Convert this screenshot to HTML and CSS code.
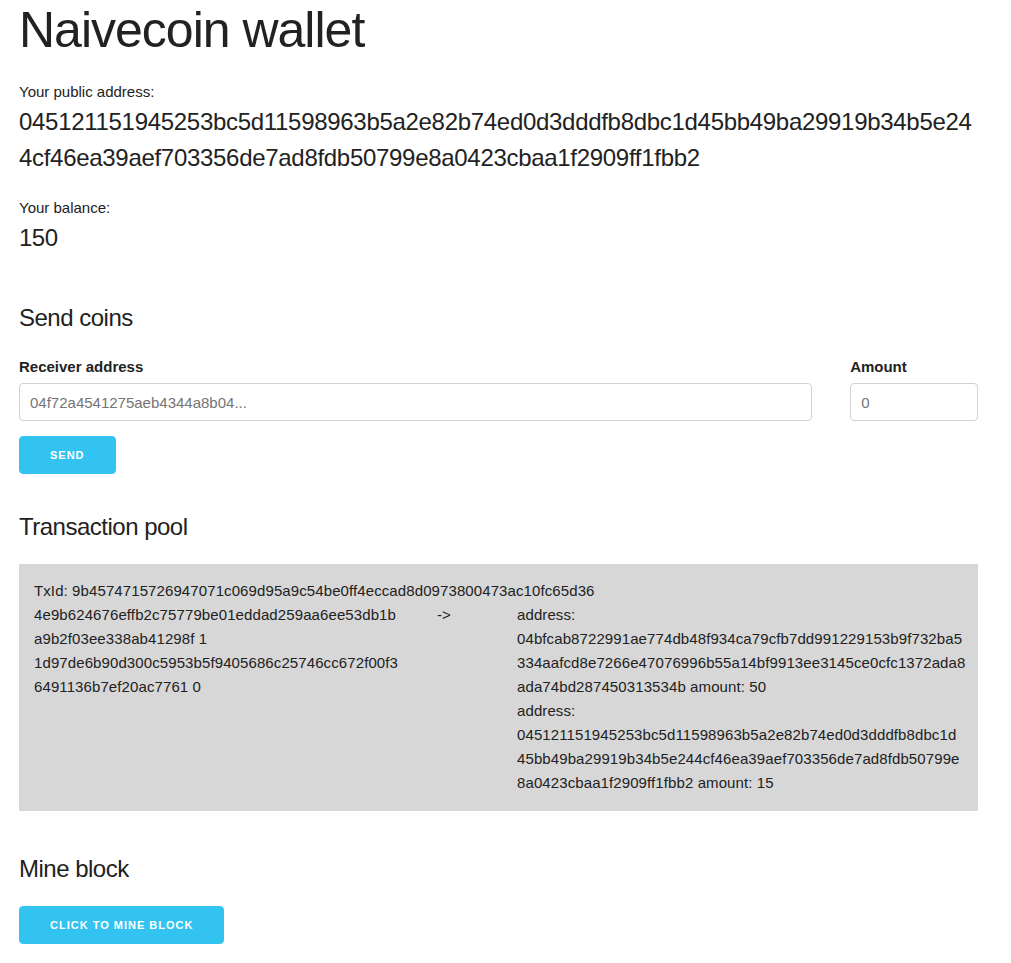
FILE: index.html
```html
<!DOCTYPE html>
<html lang="en">
<head>
<meta charset="utf-8">
<title>Naivecoin wallet</title>
<link rel="stylesheet" href="styles.css">
</head>
<body>
<div class="wallet">
  <h1 class="title">Naivecoin wallet</h1>

  <section class="info">
    <p class="info-label">Your public address:</p>
    <h5 class="address">045121151945253bc5d11598963b5a2e82b74ed0d3dddfb8dbc1d45bb49ba29919b34b5e244cf46ea39aef703356de7ad8fdb50799e8a0423cbaa1f2909ff1fbb2</h5>
    <p class="info-label">Your balance:</p>
    <h5 class="balance">150</h5>
  </section>

  <section class="send">
    <h5 class="section-title">Send coins</h5>
    <div class="form-row">
      <div class="field">
        <label class="field-label" for="receiver">Receiver address</label>
        <input class="field-input" id="receiver" type="text" placeholder="04f72a4541275aeb4344a8b04...">
      </div>
      <div class="field">
        <label class="field-label" for="amount">Amount</label>
        <input class="field-input" id="amount" type="text" placeholder="0">
      </div>
    </div>
    <button class="btn" type="button">Send</button>
  </section>

  <section class="pool">
    <h5 class="section-title">Transaction pool</h5>
    <div class="pool-box">
      <div class="tx">
        <div class="tx-id">TxId: 9b4574715726947071c069d95a9c54be0ff4eccad8d0973800473ac10fc65d36</div>
        <div class="tx-body">
          <div class="tx-ins">
            <div class="tx-in">4e9b624676effb2c75779be01eddad259aa6ee53db1ba9b2f03ee338ab41298f 1</div>
            <div class="tx-in">1d97de6b90d300c5953b5f9405686c25746cc672f00f36491136b7ef20ac7761 0</div>
          </div>
          <div class="tx-arrow">-&gt;</div>
          <div class="tx-outs">
            <div class="tx-out">address: 04bfcab8722991ae774db48f934ca79cfb7dd991229153b9f732ba5334aafcd8e7266e47076996b55a14bf9913ee3145ce0cfc1372ada8ada74bd287450313534b amount: 50</div>
            <div class="tx-out">address: 045121151945253bc5d11598963b5a2e82b74ed0d3dddfb8dbc1d<br>45bb49ba29919b34b5e244cf46ea39aef703356de7ad8fdb50799e<br>8a0423cbaa1f2909ff1fbb2 amount: 15</div>
          </div>
        </div>
      </div>
    </div>
  </section>

  <section class="mine">
    <h5 class="section-title">Mine block</h5>
    <button class="btn" type="button">Click to mine block</button>
  </section>
</div>
</body>
</html>
```

FILE: styles.css
```css
html, body {
  margin: 0;
  padding: 0;
  background: #fff;
}

body {
  font-family: "Liberation Sans", Helvetica, Arial, sans-serif;
  font-size: 15px;
  line-height: 24px;
  color: #222;
}

.wallet {
  width: 959px;
  margin-left: 19px;
}

.title {
  margin: 0 0 20px;
  font-size: 50px;
  line-height: 60px;
  font-weight: 400;
  letter-spacing: -1px;
}

h5 {
  margin: 0;
  font-size: 24px;
  line-height: 36px;
  font-weight: 400;
  letter-spacing: -0.5px;
}

.info-label {
  margin: 0;
}

.address {
  letter-spacing: -0.3px;
  overflow-wrap: break-word;
  margin-bottom: 20px;
}

.info {
  margin-bottom: 44px;
}

.section-title {
  margin-bottom: 19px;
}

.form-row {
  display: grid;
  grid-template-columns: 82.6666667% 13.3333333%;
  column-gap: 4%;
}

.field {
  display: flex;
  flex-direction: column;
}

.field-label {
  font-weight: 700;
  margin-bottom: 4px;
}

.field-input {
  box-sizing: border-box;
  width: 100%;
  height: 38px;
  margin: 0 0 15px;
  padding: 6px 10px;
  border: 1px solid #d1d1d1;
  border-radius: 4px;
  background: #fff;
  font-family: inherit;
  font-size: 15px;
  color: #222;
  outline: none;
}

.field-input::placeholder {
  color: #757575;
}

.btn {
  box-sizing: border-box;
  display: inline-block;
  height: 38px;
  padding: 0 30px;
  border: 1px solid #33c3f0;
  border-radius: 4px;
  background: #33c3f0;
  color: #fff;
  font-family: inherit;
  font-size: 11px;
  font-weight: 700;
  line-height: 36px;
  letter-spacing: 1px;
  text-transform: uppercase;
  text-align: center;
  cursor: pointer;
}

.send {
  margin-bottom: 35px;
}

.pool {
  margin-bottom: 40px;
}

.pool-box {
  background: #d7d7d7;
  padding: 15px 12px 16px 15px;
  letter-spacing: 0.1px;
}

.tx-id {
  overflow-wrap: break-word;
}

.tx-body {
  display: grid;
  grid-template-columns: 367px 44px minmax(0, 1fr);
  column-gap: 36px;
}

.tx-ins,
.tx-outs {
  min-width: 0;
}

.tx-in,
.tx-out {
  overflow-wrap: break-word;
}
```
